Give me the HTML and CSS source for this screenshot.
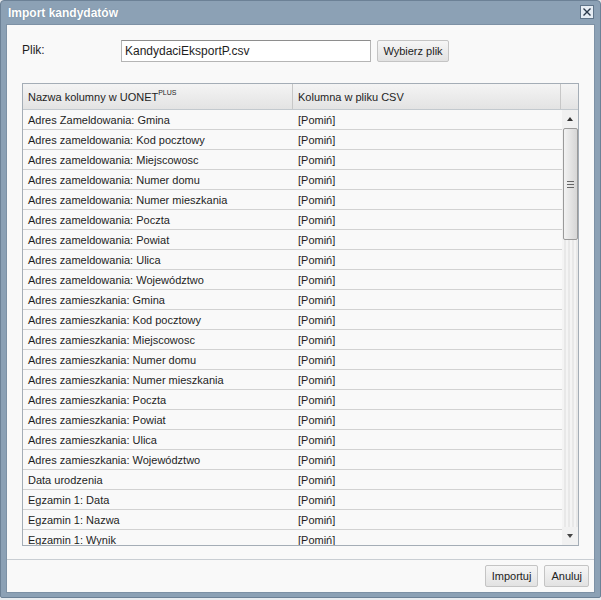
FILE: index.html
```html
<!DOCTYPE html>
<html>
<head>
    <meta charset="utf-8" />
    <title>Import kandydatów</title>
    <meta name="viewport" content="width=device-width, initial-scale=1">
    <link rel="stylesheet" href="styles.css">
</head>
<body>
    <div class="window">
        <div class="titlebar">
            <span class="title">Import kandydatów</span>
            <div class="close">
                <svg width="10" height="10" viewBox="0 0 10 10"><path d="M1.5 1.5 L8.5 8.5 M8.5 1.5 L1.5 8.5" stroke="#2b3a4c" stroke-width="1.4" fill="none"/></svg>
            </div>
        </div>
        <div class="content">
            <div class="main">
                <div class="file-row">
                    <label class="file-label">Plik:</label>
                    <div class="file-input">KandydaciEksportP.csv</div>
                    <div class="btn btn-file">Wybierz plik</div>
                </div>
                <div class="grid">
                    <div class="grid-head">
                        <div class="hcell col1">Nazwa kolumny w UONET<sup>PLUS</sup></div>
                        <div class="hcell col2">Kolumna w pliku CSV</div>
                        <div class="hcell col-sb"></div>
                    </div>
                    <div class="grid-body">
                        <div class="rows">
                            <div class="row"><span class="c1">Adres Zameldowania: Gmina</span><span class="c2">[Pomiń]</span></div>
                            <div class="row"><span class="c1">Adres zameldowania: Kod pocztowy</span><span class="c2">[Pomiń]</span></div>
                            <div class="row"><span class="c1">Adres zameldowania: Miejscowosc</span><span class="c2">[Pomiń]</span></div>
                            <div class="row"><span class="c1">Adres zameldowania: Numer domu</span><span class="c2">[Pomiń]</span></div>
                            <div class="row"><span class="c1">Adres zameldowania: Numer mieszkania</span><span class="c2">[Pomiń]</span></div>
                            <div class="row"><span class="c1">Adres zameldowania: Poczta</span><span class="c2">[Pomiń]</span></div>
                            <div class="row"><span class="c1">Adres zameldowania: Powiat</span><span class="c2">[Pomiń]</span></div>
                            <div class="row"><span class="c1">Adres zameldowania: Ulica</span><span class="c2">[Pomiń]</span></div>
                            <div class="row"><span class="c1">Adres zameldowania: Województwo</span><span class="c2">[Pomiń]</span></div>
                            <div class="row"><span class="c1">Adres zamieszkania: Gmina</span><span class="c2">[Pomiń]</span></div>
                            <div class="row"><span class="c1">Adres zamieszkania: Kod pocztowy</span><span class="c2">[Pomiń]</span></div>
                            <div class="row"><span class="c1">Adres zamieszkania: Miejscowosc</span><span class="c2">[Pomiń]</span></div>
                            <div class="row"><span class="c1">Adres zamieszkania: Numer domu</span><span class="c2">[Pomiń]</span></div>
                            <div class="row"><span class="c1">Adres zamieszkania: Numer mieszkania</span><span class="c2">[Pomiń]</span></div>
                            <div class="row"><span class="c1">Adres zamieszkania: Poczta</span><span class="c2">[Pomiń]</span></div>
                            <div class="row"><span class="c1">Adres zamieszkania: Powiat</span><span class="c2">[Pomiń]</span></div>
                            <div class="row"><span class="c1">Adres zamieszkania: Ulica</span><span class="c2">[Pomiń]</span></div>
                            <div class="row"><span class="c1">Adres zamieszkania: Województwo</span><span class="c2">[Pomiń]</span></div>
                            <div class="row"><span class="c1">Data urodzenia</span><span class="c2">[Pomiń]</span></div>
                            <div class="row"><span class="c1">Egzamin 1: Data</span><span class="c2">[Pomiń]</span></div>
                            <div class="row"><span class="c1">Egzamin 1: Nazwa</span><span class="c2">[Pomiń]</span></div>
                            <div class="row"><span class="c1">Egzamin 1: Wynik</span><span class="c2">[Pomiń]</span></div>
                        </div>
                        <div class="scrollbar">
                            <div class="sb-arrow sb-up"></div>
                            <div class="sb-thumb"><span class="grip"></span></div>
                            <div class="sb-track"></div>
                            <div class="sb-arrow sb-down"></div>
                        </div>
                    </div>
                </div>
            </div>
            <div class="footer">
                <div class="btn">Importuj</div>
                <div class="btn">Anuluj</div>
            </div>
        </div>
    </div>
</body>
</html>
```

FILE: styles.css
```css
body{
    margin: 0;
    background: #e9ecef;
    font-family: "Liberation Sans", Arial, sans-serif;
    font-size: 11px;
    color: #1e1e1e;
}
.window{
    box-sizing: border-box;
    width: 601px;
    height: 598px;
    padding: 0 5px 4px 5px;
    background: #8ca1b5;
    border: 1px solid #6c8196;
    border-radius: 4px 4px 2px 2px;
    display: flex;
    flex-direction: column;
}
.titlebar{
    height: 23px;
    display: flex;
    align-items: center;
    justify-content: space-between;
}
.title{
    color: #fff;
    font-weight: bold;
    font-size: 12px;
    padding-left: 2px;
    text-shadow: 0 0 1px #6b7f93;
}
.close{
    width: 12px;
    height: 12px;
    margin-right: 1px;
    margin-top: -1px;
    border: 1px solid #60758a;
    background: #e6edf4;
    display: flex;
    align-items: center;
    justify-content: center;
}
.content{
    flex: 1;
    display: flex;
    flex-direction: column;
    background: #f9f9f9;
    border: 1px solid #7d91a5;
}
.main{
    flex: 1;
    padding: 15px 15px 0 15px;
    border-bottom: 1px solid #c9ced3;
}
.file-row{
    display: flex;
    align-items: center;
    height: 22px;
}
.file-label{
    width: 99px;
    margin-top: -2px;
    font-size: 12px;
}
.file-input{
    box-sizing: border-box;
    width: 250px;
    height: 22px;
    line-height: 20px;
    padding-left: 3px;
    font-size: 12px;
    background: #fff;
    border: 1px solid #b5b5b5;
    border-top-color: #8e8e8e;
}
.btn{
    box-sizing: border-box;
    height: 22px;
    line-height: 20px;
    padding: 0 6px;
    border: 1px solid #c4c4c4;
    border-radius: 2px;
    background: linear-gradient(#f6f6f6, #e2e2e2);
    color: #222;
}
.btn-file{
    margin-left: 6px;
    width: 72px;
    text-align: center;
    padding: 0;
}
.grid{
    margin-top: 21px;
    border: 1px solid #a4adb6;
    background: #f9f9f9;
}
.grid-head{
    display: flex;
    height: 25px;
    border-bottom: 1px solid #c3c9ce;
    background: linear-gradient(#f4f4f4, #e3e3e3);
}
.hcell{
    box-sizing: border-box;
    line-height: 26px;
    padding-left: 5px;
    border-right: 1px solid #c7c7c7;
}
.hcell sup{
    font-size: 7px;
    vertical-align: 6px;
    line-height: 0;
}
.col1{ width: 270px; }
.col2{ width: 268px; }
.col-sb{ width: 17px; border-right: none; }
.grid-body{
    display: flex;
    height: 435px;
    overflow: hidden;
}
.rows{
    width: 539px;
}
.row{
    display: flex;
    height: 19px;
    line-height: 20px;
    border-bottom: 1px solid #d2d2d2;
}
.c1{
    width: 270px;
    padding-left: 5px;
    box-sizing: border-box;
}
.c2{
    padding-left: 5px;
}
.scrollbar{
    width: 16px;
    display: flex;
    flex-direction: column;
    background: #f1f1f1;
}
.sb-arrow{
    height: 18px;
    position: relative;
}
.sb-up::after,
.sb-down::after{
    content: '';
    position: absolute;
    left: 5px;
    border-left: 3px solid transparent;
    border-right: 3px solid transparent;
}
.sb-up::after{
    top: 7px;
    border-bottom: 4px solid #333;
}
.sb-down::after{
    top: 7px;
    border-top: 4px solid #444;
}
.sb-thumb{
    box-sizing: border-box;
    height: 112px;
    margin-left: 1px;
    border: 1px solid #9a9a9a;
    border-radius: 2px;
    background: linear-gradient(to right, #f2f2f2, #d6d6d6);
    display: flex;
    align-items: center;
    justify-content: center;
}
.grip{
    width: 7px;
    height: 5px;
    border-top: 1px solid #666;
    border-bottom: 1px solid #666;
    position: relative;
}
.grip::after{
    content: '';
    position: absolute;
    left: 0;
    right: 0;
    top: 2px;
    border-top: 1px solid #666;
}
.sb-track{
    flex: 1;
    background: repeating-linear-gradient(to right, #f4f4f4 0, #f4f4f4 2px, #e8e8e8 2px, #e8e8e8 4px);
}
.footer{
    height: 32px;
    display: flex;
    justify-content: flex-end;
    align-items: flex-start;
    gap: 6px;
    padding: 5px 5px 0 0;
    box-sizing: border-box;
}
.footer .btn{
    padding: 0 6px;
}
```
